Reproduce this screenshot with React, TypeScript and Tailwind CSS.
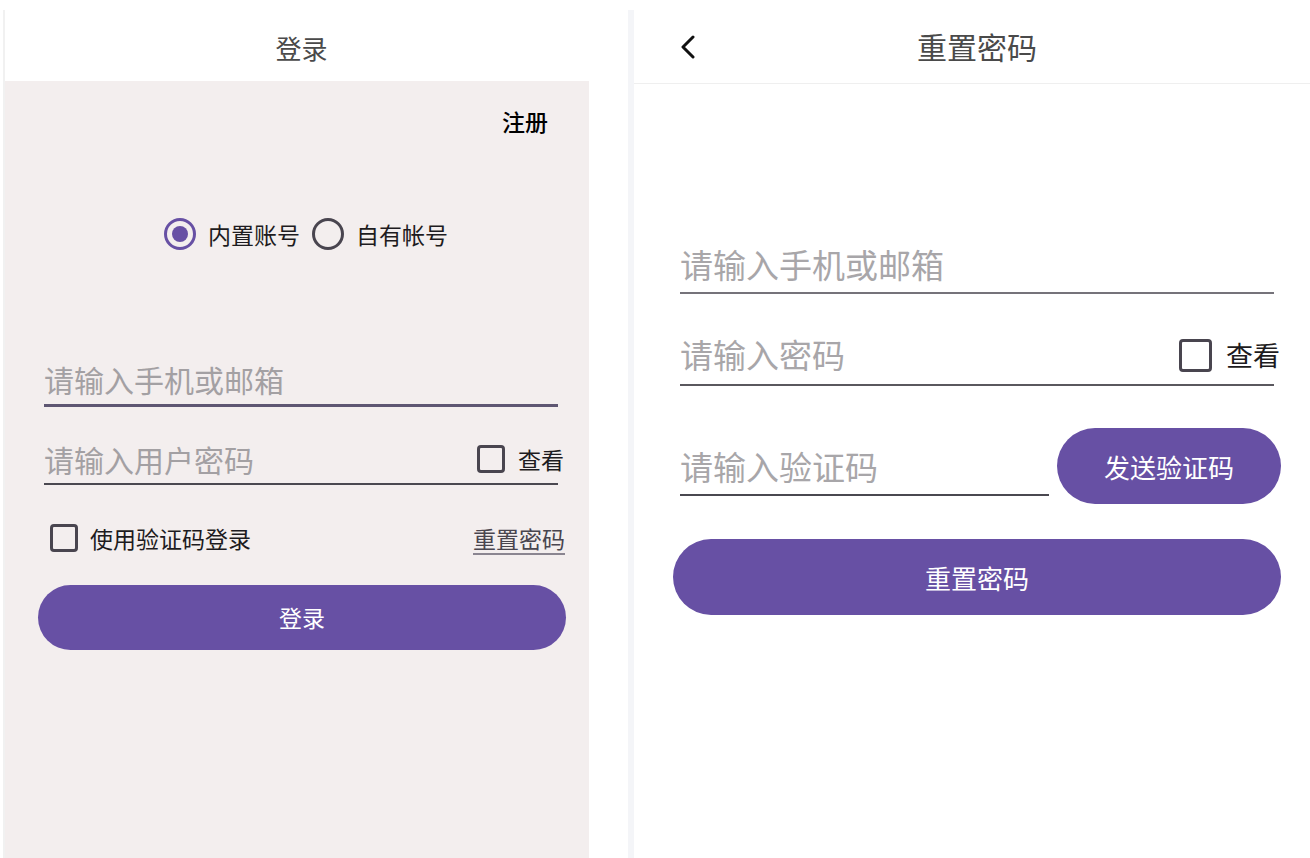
import React, { useState } from "react";

const purple = "bg-[#6750a4]";

const Checkbox = ({ size, checked, onChange }: { size: "sm" | "lg"; checked: boolean; onChange: () => void }) => (
  <button
    type="button"
    onClick={onChange}
    className={
      size === "sm"
        ? "flex h-[28px] w-[28px] items-center justify-center rounded-[4px] border-[3px] border-[#49454f]"
        : "flex h-[33px] w-[33px] items-center justify-center rounded-[4px] border-[3px] border-[#49454f]"
    }
  >
    {checked && <span className="h-3 w-3 bg-[#49454f]" />}
  </button>
);

const Radio = ({ active, label, onClick }: { active: boolean; label: string; onClick: () => void }) => (
  <button type="button" onClick={onClick} className="flex items-center gap-[12px]">
    <span
      className={
        active
          ? "flex h-[32px] w-[32px] items-center justify-center rounded-full border-[3px] border-[#6750a4]"
          : "flex h-[32px] w-[32px] items-center justify-center rounded-full border-[3px] border-[#49454f]"
      }
    >
      {active && <span className="h-[16px] w-[16px] rounded-full bg-[#6750a4]" />}
    </span>
    <span className="text-[23px] leading-[32px] text-[#1d1b20]">{label}</span>
  </button>
);

const LoginView = () => {
  const [account, setAccount] = useState<"builtin" | "own">("builtin");
  const [showPwd, setShowPwd] = useState(false);
  const [useCode, setUseCode] = useState(false);

  return (
    <div className="mt-[10px] flex w-[586px] flex-col border-l-2 border-[#f1f1f1]">
      <div className="flex h-[71px] items-center justify-center bg-white pl-[9px] pt-[4px] text-[26px] text-[#4a4a4a]">
        登录
      </div>
      <div className="flex flex-1 flex-col bg-[#f3eeee]">
        <div className="flex justify-end pr-[41px] pt-[24px]">
          <span className="text-[23px] font-medium leading-[32px] text-black">注册</span>
        </div>

        <div className="mt-[81px] flex justify-center gap-[12px] pl-[18px]">
          <Radio active={account === "builtin"} label="内置账号" onClick={() => setAccount("builtin")} />
          <Radio active={account === "own"} label="自有帐号" onClick={() => setAccount("own")} />
        </div>

        <div className="ml-[39px] mt-[101px] flex h-[56px] w-[514px] items-center border-b-[3px] border-[#5e5672] pt-[3px]">
          <input
            placeholder="请输入手机或邮箱"
            className="w-full bg-transparent text-[30px] text-[#1d1b20] outline-none placeholder:text-[#a3a0a3]"
          />
        </div>

        <div className="ml-[39px] mt-[28px] flex h-[50px] w-[514px] items-center border-b-2 border-[#4a4850]">
          <input
            type={showPwd ? "text" : "password"}
            placeholder="请输入用户密码"
            className="min-w-0 flex-1 bg-transparent text-[30px] text-[#1d1b20] outline-none placeholder:text-[#a3a0a3]"
          />
          <div className="-mr-[6px] flex items-center gap-[13px]">
            <Checkbox size="sm" checked={showPwd} onChange={() => setShowPwd(!showPwd)} />
            <span className="text-[23px] text-[#1d1b20]">查看</span>
          </div>
        </div>

        <div className="ml-[45px] mt-[33px] flex h-[40px] w-[515px] items-center justify-between">
          <div className="flex items-center gap-[12px]">
            <Checkbox size="sm" checked={useCode} onChange={() => setUseCode(!useCode)} />
            <span className="text-[23px] text-[#1d1b20]">使用验证码登录</span>
          </div>
          <span className="text-[23px] leading-[30px] text-[#49454f] underline decoration-[#8a8590] decoration-2 underline-offset-[5px]">
            重置密码
          </span>
        </div>

        <button
          type="button"
          className={`ml-[33px] mt-[27px] flex h-[65px] w-[528px] items-center justify-center rounded-full ${purple} text-[23px] text-white`}
        >
          登录
        </button>
      </div>
    </div>
  );
};

const ResetView = () => {
  const [showPwd, setShowPwd] = useState(false);

  return (
    <div className="mt-[10px] flex w-[682px] flex-col border-l-[6px] border-[#f4f5f8] bg-white">
      <div className="grid h-[74px] grid-cols-[1fr_auto_1fr] items-center border-b border-[#efefef]">
        <div className="flex items-center pl-[46px]">
          <svg width="16" height="24" viewBox="0 0 16 24" fill="none">
            <polyline points="13,2 3,12 13,22" stroke="#111" strokeWidth="3" strokeLinecap="round" strokeLinejoin="round" />
          </svg>
        </div>
        <span className="pl-[10px] text-[30px] text-[#4a4a4a]">重置密码</span>
        <div />
      </div>

      <div className="ml-[46px] mt-[150px] flex h-[60px] w-[594px] items-center border-b-2 border-[#75737a] pt-[4px]">
        <input
          placeholder="请输入手机或邮箱"
          className="w-full bg-transparent text-[33px] text-[#1d1b20] outline-none placeholder:text-[#a8a6a9]"
        />
      </div>

      <div className="ml-[46px] mt-[32px] flex h-[60px] w-[594px] items-center border-b-2 border-[#5a585e]">
        <input
          type={showPwd ? "text" : "password"}
          placeholder="请输入密码"
          className="min-w-0 flex-1 bg-transparent text-[33px] text-[#1d1b20] outline-none placeholder:text-[#a8a6a9]"
        />
        <div className="-mr-[6px] flex items-center gap-[14px]">
          <Checkbox size="lg" checked={showPwd} onChange={() => setShowPwd(!showPwd)} />
          <span className="text-[27px] text-[#1d1b20]">查看</span>
        </div>
      </div>

      <div className="ml-[46px] mt-[42px] flex items-start">
        <div className="flex h-[68px] w-[369px] items-center border-b-2 border-[#4a4850] pt-[12px]">
          <input
            placeholder="请输入验证码"
            className="w-full bg-transparent text-[33px] text-[#1d1b20] outline-none placeholder:text-[#a8a6a9]"
          />
        </div>
        <button
          type="button"
          className={`ml-[8px] flex h-[76px] w-[224px] items-center justify-center rounded-full ${purple} text-[26px] text-white`}
        >
          发送验证码
        </button>
      </div>

      <button
        type="button"
        className={`ml-[39px] mt-[35px] flex h-[76px] w-[608px] items-center justify-center rounded-full ${purple} text-[26px] text-white`}
      >
        重置密码
      </button>
    </div>
  );
};

export default function App() {
  return (
    <div className="flex h-[858px] w-[1310px] overflow-hidden bg-white pl-[3px] font-['Noto_Sans_CJK_SC','Noto_Sans',sans-serif]">
      <LoginView />
      <div className="w-[39px] shrink-0" />
      <ResetView />
    </div>
  );
}
